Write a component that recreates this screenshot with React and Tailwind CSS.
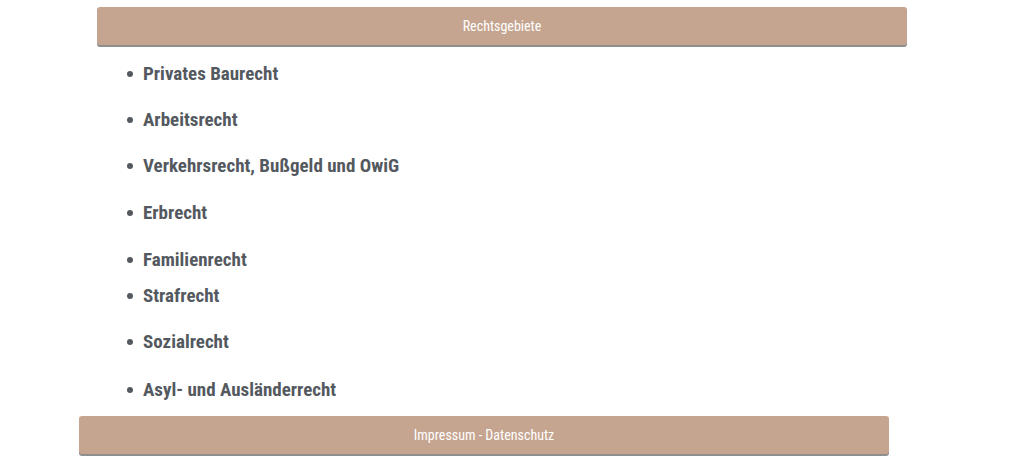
import React from "react";

const items = [
  { label: "Privates Baurecht", mt: "mt-[17px]" },
  { label: "Arbeitsrecht", mt: "mt-[22px]" },
  { label: "Verkehrsrecht, Bußgeld und OwiG", mt: "mt-[22px]" },
  { label: "Erbrecht", mt: "mt-[23px]" },
  { label: "Familienrecht", mt: "mt-[23px]" },
  { label: "Strafrecht", mt: "mt-[12px]" },
  { label: "Sozialrecht", mt: "mt-[22px]" },
  { label: "Asyl- und Ausländerrecht", mt: "mt-[24px]" },
];

const font = "font-['Roboto_Condensed','Liberation_Sans_Narrow',Roboto,sans-serif]";

const Bar = ({ children, className }) => (
  <div
    className={`w-[810px] h-[38px] flex items-center justify-center rounded-[3px] bg-[#c6a590] text-white text-[14px] shadow-[0_2px_0_#8f8f8f] ${className}`}
  >
    {children}
  </div>
);

const App = () => {
  return (
    <div className={`w-[1012px] h-[469px] bg-white overflow-hidden pt-[7px] ${font}`}>
      <Bar className="ml-[97px]">Rechtsgebiete</Bar>

      <ul className="ml-[127px]">
        {items.map((it) => (
          <li
            key={it.label}
            className={`flex items-center gap-[10px] h-[24px] ${it.mt} text-[19px] font-bold text-[#54595f]`}
          >
            <span className="w-[6px] h-[6px] rounded-full bg-[#54595f]" />
            {it.label}
          </li>
        ))}
      </ul>

      <Bar className="ml-[79px] mt-[14px]">Impressum - Datenschutz</Bar>
    </div>
  );
};

export default App;
